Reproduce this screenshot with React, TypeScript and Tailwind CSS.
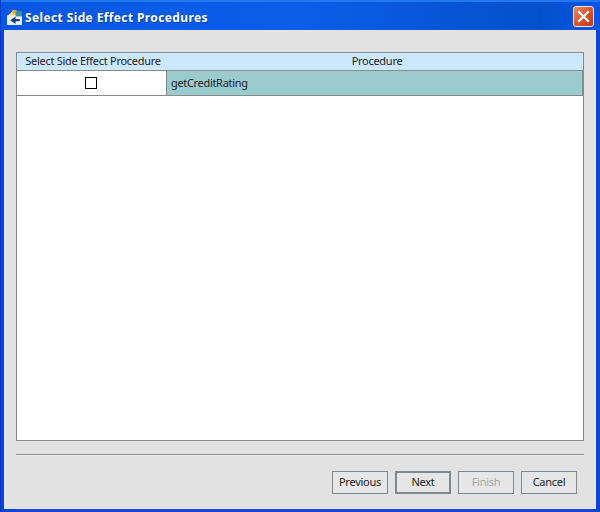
export default function App() {
  const btn = "w-14 h-[23px] border border-[#7f8a8f] bg-[#e6e6e6] flex items-center justify-center text-[11px] tracking-[-0.25px] text-[#222]";
  return (
    <div className="w-[600px] h-[512px] flex overflow-hidden bg-[#0a45d8] font-['Noto_Sans',sans-serif]">
      <div className="w-full flex flex-col border-l-[1px] border-[#0038c8]">
        <div className="h-[30px] shrink-0 flex items-center pl-[5px] pr-[5px] pt-[4px] bg-[linear-gradient(90deg,#0658e4_0%,#0a5ee8_50%,#0450cc_90%,#0658e4_100%)] border-t-2 border-[#1f78f0]">
          <svg width="17" height="17" viewBox="0 0 16 16" className="shrink-0 -mt-[2px]">
            <path d="M1 7 L7 1 L10 2 L10 7 Z" fill="#f4d76a" />
            <path d="M6 1 L10 1 L10 4 L6 4 Z" fill="#e8a83c" />
            <rect x="1" y="6" width="14" height="9" fill="#f2f6fa" />
            <rect x="9" y="2" width="6" height="5" fill="#3f8fa8" />
            <path d="M9 7 L4 10.5 L9 14 Z" fill="#123f78" />
            <rect x="8" y="9.5" width="5" height="2" fill="#123f78" />
          </svg>
          <span className="ml-[2px] -mt-[1px] text-[12px] font-bold text-white tracking-[0.38px] [text-shadow:1px_1px_0_#0a3ea8]">Select Side Effect Procedures</span>
          <div className="ml-auto mr-[1px] -mt-[3px] w-[21px] h-[21px] rounded-[3px] border border-[#f4e4dc] bg-gradient-to-br from-[#e8896a] via-[#d9552f] to-[#c03a1c] flex items-center justify-center">
            <svg width="13" height="13" viewBox="0 0 13 13">
              <path d="M2 2 L11 11 M11 2 L2 11" stroke="#fff" strokeWidth="2.2" strokeLinecap="square" />
            </svg>
          </div>
        </div>
        <div className="flex-1 min-h-0 ml-[3px] mr-[4px] mb-[3px] bg-[#e2e2e2] flex flex-col px-3 pt-[22px]">
          <div className="h-[389px] shrink-0 border border-[#8a8a8a] bg-white flex flex-col">
            <div className="h-[17px] shrink-0 bg-[#cce8ff] flex items-center text-[11px] tracking-[-0.28px] text-[#222]">
              <div className="w-[149px] text-center pl-[3px]">Select Side Effect Procedure</div>
              <div className="flex-1 text-center pl-[5px]">Procedure</div>
            </div>
            <div className="h-[26px] shrink-0 flex border-y border-[#8a8a8a]">
              <div className="w-[149px] flex items-center justify-center pr-[2px]">
                <div className="w-[12px] h-[12px] border border-black bg-white" />
              </div>
              <div className="flex-1 bg-[#99cccc] border-x border-[#8a8a8a] flex items-center pl-[4px] text-[11px] tracking-[-0.32px] text-[#222]">getCreditRating</div>
            </div>
          </div>
          <div className="mt-[13px] h-[2px] bg-[#8f8f8f] border-b border-[#eee] shrink-0" />
          <div className="mt-[15px] flex justify-end gap-[7px] pr-[7px]">
            <div className={btn}>Previous</div>
            <div className={btn + " border-2"}>Next</div>
            <div className={btn + " text-[#a8a8a8]"}>Finish</div>
            <div className={btn}>Cancel</div>
          </div>
        </div>
      </div>
    </div>
  );
}
